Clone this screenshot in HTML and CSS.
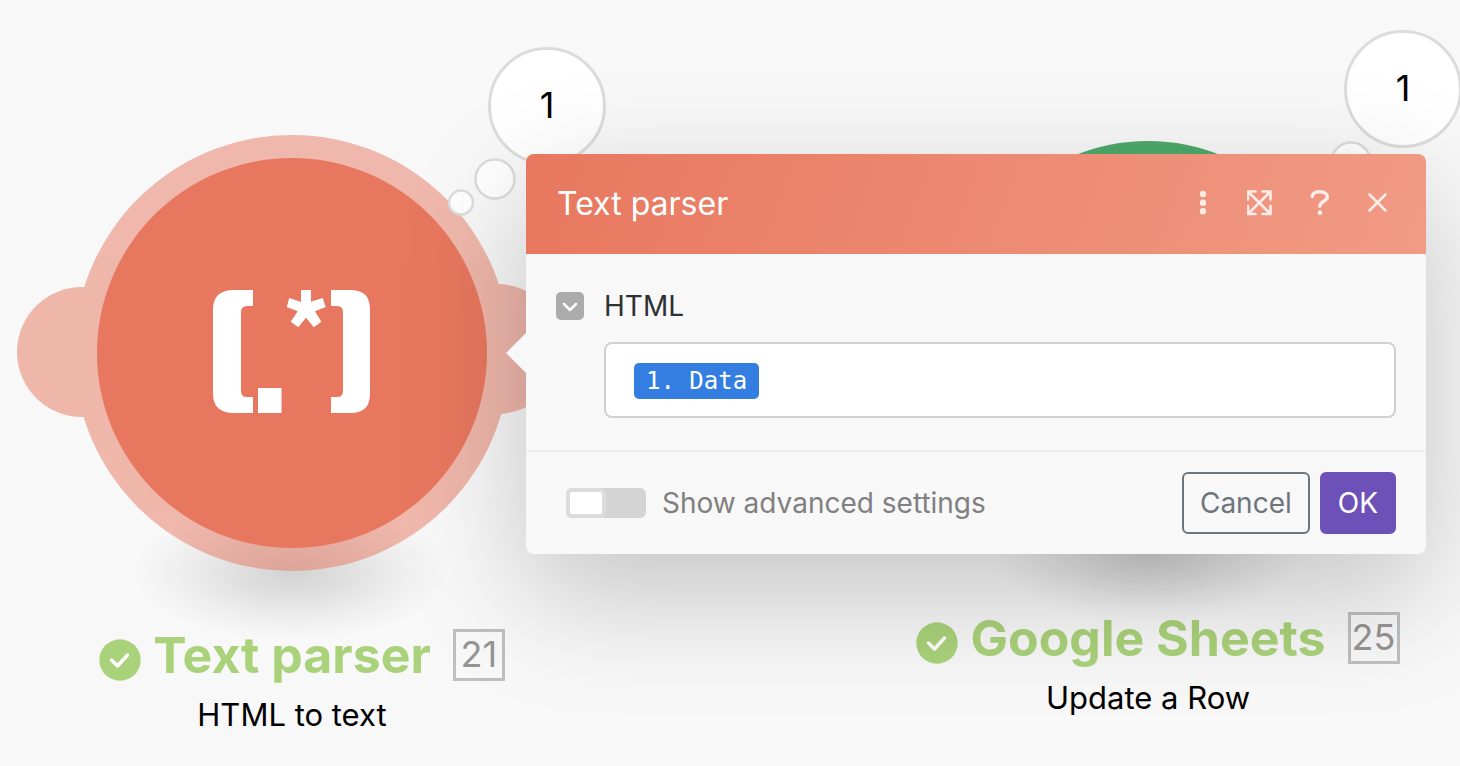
FILE: index.html
```html
<!DOCTYPE html>
<html lang="en">
<head>
<meta charset="utf-8">
<title>Scenario editor</title>
<link rel="stylesheet" href="styles.css">
</head>
<body>
<main class="canvas">
  <section class="node node-parser">
    <svg class="node-art" viewBox="-260 -218 520 436" aria-hidden="true">
      <defs>
        <radialGradient id="ground">
          <stop offset="0" stop-color="#000" stop-opacity=".15"/>
          <stop offset=".35" stop-color="#000" stop-opacity=".1"/>
          <stop offset=".7" stop-color="#000" stop-opacity=".04"/>
          <stop offset="1" stop-color="#000" stop-opacity="0"/>
        </radialGradient>
      </defs>
      <ellipse cx="0" cy="219" rx="158" ry="68" fill="url(#ground)"/>
      <g fill="#e8775f" opacity=".5">
        <circle cx="-210" cy="-1" r="65"/>
        <circle cx="205" cy="-4" r="65"/>
        <circle r="218"/>
      </g>
      <circle r="195" fill="#e8775f"/>
      <g fill="#fff">
        <path d="M-39-63h-19c-14 0-21 6-21 20v83c0 14 7 20 21 20h19v-16h-6q-6 0-6-6v-79q0-6 6-6h6z"/>
        <path d="M39-63h19c14 0 20 6 20 20v83c0 14-6 20-20 20h-19v-16h6q6 0 6-6v-79q0-6-6-6h-6z"/>
        <path d="M-34 35h23.500v25h-23.500z"/>
        <path d="M9-63h10v11.700l11.700-3.700 3 9-10.700 4.300 6.300 10.400-7.600 5.600-7.700-9.600-7.700 9.600-7.600-5.600 7-10.400-11-4.300 2.600-9 11.700 4z"/>
      </g>
      <g fill="#fff" stroke="#dcdcdc" stroke-width="2.500">
        <circle cx="203" cy="-174" r="19.500"/>
        <circle cx="169" cy="-150.500" r="12"/>
      </g>
    </svg>
    <div class="bubble">1</div>
    <div class="heading">
      <svg class="check" viewBox="0 0 42 42" role="img" aria-label="Done"><circle cx="21" cy="21" r="20.700"/><path d="M12.500 21l6 6 10-11"/></svg>
      <h2 class="name">Text parser</h2>
      <span class="count">21</span>
    </div>
    <p class="caption">HTML to text</p>
  </section>

  <section class="node node-sheets">
    <svg class="node-art" viewBox="-260 -218 520 436" aria-hidden="true">
      <ellipse cx="0" cy="219" rx="158" ry="68" fill="url(#ground)"/>
      <circle r="195" fill="#4ea96b"/>
      <g fill="#fff" stroke="#dcdcdc" stroke-width="2.500">
        <circle cx="203" cy="-174" r="19.500"/>
        <circle cx="169" cy="-150.500" r="12"/>
      </g>
    </svg>
    <div class="bubble">1</div>
    <div class="heading">
      <svg class="check" viewBox="0 0 42 42" role="img" aria-label="Done"><circle cx="21" cy="21" r="20.700"/><path d="M12.500 21l6 6 10-11"/></svg>
      <h2 class="name">Google Sheets</h2>
      <span class="count">25</span>
    </div>
    <p class="caption">Update a Row</p>
  </section>

  <form class="dialog" role="dialog" aria-labelledby="dialog-title">
    <header class="dialog-head">
      <h1 class="dialog-title" id="dialog-title">Text parser</h1>
      <button class="tool" type="button" aria-label="More"><svg viewBox="0 0 28 28"><g fill="currentColor"><circle cx="14" cy="5" r="3.200"/><circle cx="14" cy="13.700" r="3.200"/><circle cx="14" cy="22.300" r="3.200"/></g></svg></button>
      <button class="tool" type="button" aria-label="Expand"><svg viewBox="0 0 28 28"><path d="M8.500 2.500H1v8M15.500 2.500H23.500v8M23.500 17v8H15.500M8.500 25H1V17M1.500 3l21.500 21.500M23 3L1.500 24.500" stroke-width="2.600"/></svg></button>
      <button class="tool" type="button" aria-label="Help"><svg viewBox="0 0 28 28"><path d="M7.300 7.500c0-3.200 3-4.700 7.500-4.700s7.700 2 7.700 5.300c0 4.200-7.700 3.700-7.700 9.200" stroke-width="3.400"/><circle cx="14.900" cy="23.700" r="2.400" fill="currentColor"/></svg></button>
      <button class="tool" type="button" aria-label="Close"><svg viewBox="0 0 28 28"><path d="M6.500 5.500l16 16M22.500 5.500l-16 16" stroke-width="2.500"/></svg></button>
    </header>
    <div class="fields">
      <button class="collapse" type="button" aria-label="Collapse field"><svg viewBox="0 0 28 28"><path d="M8 12l6 6 6-6"/></svg></button>
      <span class="field-label" id="html-label">HTML</span>
      <div class="field-box" role="textbox" tabindex="0" aria-labelledby="html-label"><span class="chip">1. Data</span></div>
    </div>
    <footer class="dialog-foot">
      <input class="toggle" type="checkbox" id="advanced">
      <label class="toggle-label" for="advanced">Show advanced settings</label>
      <button class="btn btn-cancel" type="button">Cancel</button>
      <button class="btn btn-ok" type="submit">OK</button>
    </footer>
  </form>
</main>
</body>
</html>
```
FILE: styles.css
```css
*, *::before { box-sizing: border-box; }

body {
  margin: 0;
  background: #f8f8f8;
  font-family: Inter, "Liberation Sans", sans-serif;
}

h1, h2, p { margin: 0; }

button { padding: 0; border: 0; font: inherit; cursor: pointer; }

.canvas {
  position: relative;
  min-height: 100vh;
  overflow: hidden;
}

/* Modules */
.node {
  position: absolute;
  width: 520px;
  display: flex;
  flex-direction: column;
}
.node-parser { left: 32px; top: 135px; }
.node-sheets { left: 888px; top: 118px; }

.node-art { display: block; width: 100%; overflow: visible; }

.bubble {
  position: absolute;
  left: 456px;
  top: -88px;
  width: 118px;
  height: 118px;
  border: 3px solid #dcdcdc;
  border-radius: 50%;
  background: #fff;
  color: #000;
  font-size: 36px;
  line-height: 110px;
  text-align: center;
}

.heading {
  display: grid;
  grid-template-columns: 1fr auto 1fr;
  align-items: center;
  margin-top: 54px;
}
.check { width: 42px; justify-self: end; margin: 10px 12px 0 0; }
.check circle { fill: #aad27a; }
.check path {
  fill: none;
  stroke: #fff;
  stroke-width: 3.5;
  stroke-linecap: round;
  stroke-linejoin: round;
}
.name {
  color: #aad27a;
  font-size: 50px;
  font-weight: 700;
  line-height: 60px;
}
.count {
  width: 52px;
  height: 52px;
  justify-self: start;
  margin-left: 22px;
  border: 3px solid #bfbfbf;
  color: #959595;
  font-size: 36px;
  line-height: 44px;
  text-align: center;
}
.caption {
  margin-top: 12px;
  color: #000;
  font-size: 31px;
  line-height: 36px;
  text-align: center;
}

/* Settings window */
.dialog {
  position: absolute;
  left: 526px;
  right: 34px;
  top: 154px;
  border-radius: 8px;
  background: #f8f8f8;
  box-shadow: 0 40px 120px rgba(0, 0, 0, .21);
}
.dialog::before {
  content: "";
  position: absolute;
  left: -20px;
  top: 179px;
  width: 20px;
  height: 40px;
  background: #f8f8f8;
  clip-path: polygon(100% 0, 100% 100%, 0 50%);
}

.dialog-head {
  display: flex;
  align-items: center;
  gap: 30px;
  height: 100px;
  padding: 0 35px 0 31px;
  border-radius: 8px 8px 0 0;
  background: linear-gradient(110deg, #e8775f, #f19b84);
  color: #fff;
}
.dialog-title {
  flex: 1;
  font-size: 32px;
  font-weight: 400;
  line-height: 40px;
}
.tool {
  width: 28px;
  height: 30px;
  padding-bottom: 2px;
  background: none;
  color: rgba(255, 255, 255, .82);
}
.tool svg { display: block; fill: none; stroke-linecap: round; }
.tool path { stroke: currentColor; }

.fields {
  display: grid;
  grid-template-columns: 28px 1fr;
  align-items: center;
  gap: 18px 20px;
  padding: 34px 30px 32px;
}
.collapse {
  height: 28px;
  border-radius: 5px;
  background: #ababab;
}
.collapse svg {
  display: block;
  fill: none;
  stroke: #fff;
  stroke-width: 2.5;
  stroke-linecap: round;
  stroke-linejoin: round;
}
.field-label { color: #2f3030; font-size: 28px; line-height: 36px; }
.field-box {
  grid-column: 2;
  display: flex;
  align-items: center;
  height: 76px;
  padding: 2px 28px 0;
  border: 2px solid #d0d0d0;
  border-radius: 8px;
  background: #fff;
}
.chip {
  padding: 0 12px;
  border-radius: 5px;
  background: #337ee0;
  color: #fff;
  font-family: "DejaVu Sans Mono", monospace;
  font-size: 24px;
  line-height: 36px;
}

.dialog-foot {
  display: flex;
  align-items: center;
  gap: 10px;
  padding: 20px 30px 20px 40px;
  border-top: 2px solid #ececec;
}
.toggle {
  appearance: none;
  width: 80px;
  height: 30px;
  margin: 0;
  border-radius: 6px;
  background: #d4d4d4;
}
.toggle::before {
  content: "";
  display: block;
  width: 40px;
  height: 30px;
  border: 4px solid #dcdcdc;
  border-radius: 6px;
  background: #fff;
}
.toggle-label {
  flex: 1;
  padding-left: 6px;
  color: #808080;
  font-size: 28px;
  line-height: 36px;
}
.btn {
  padding: 0 16px;
  border: 2px solid #6c757d;
  border-radius: 6px;
  font-size: 28px;
  line-height: 58px;
}
.btn-cancel { background: transparent; color: #6c757d; }
.btn-ok { border-color: #6d51b8; background: #6d51b8; color: #fff; }
```
